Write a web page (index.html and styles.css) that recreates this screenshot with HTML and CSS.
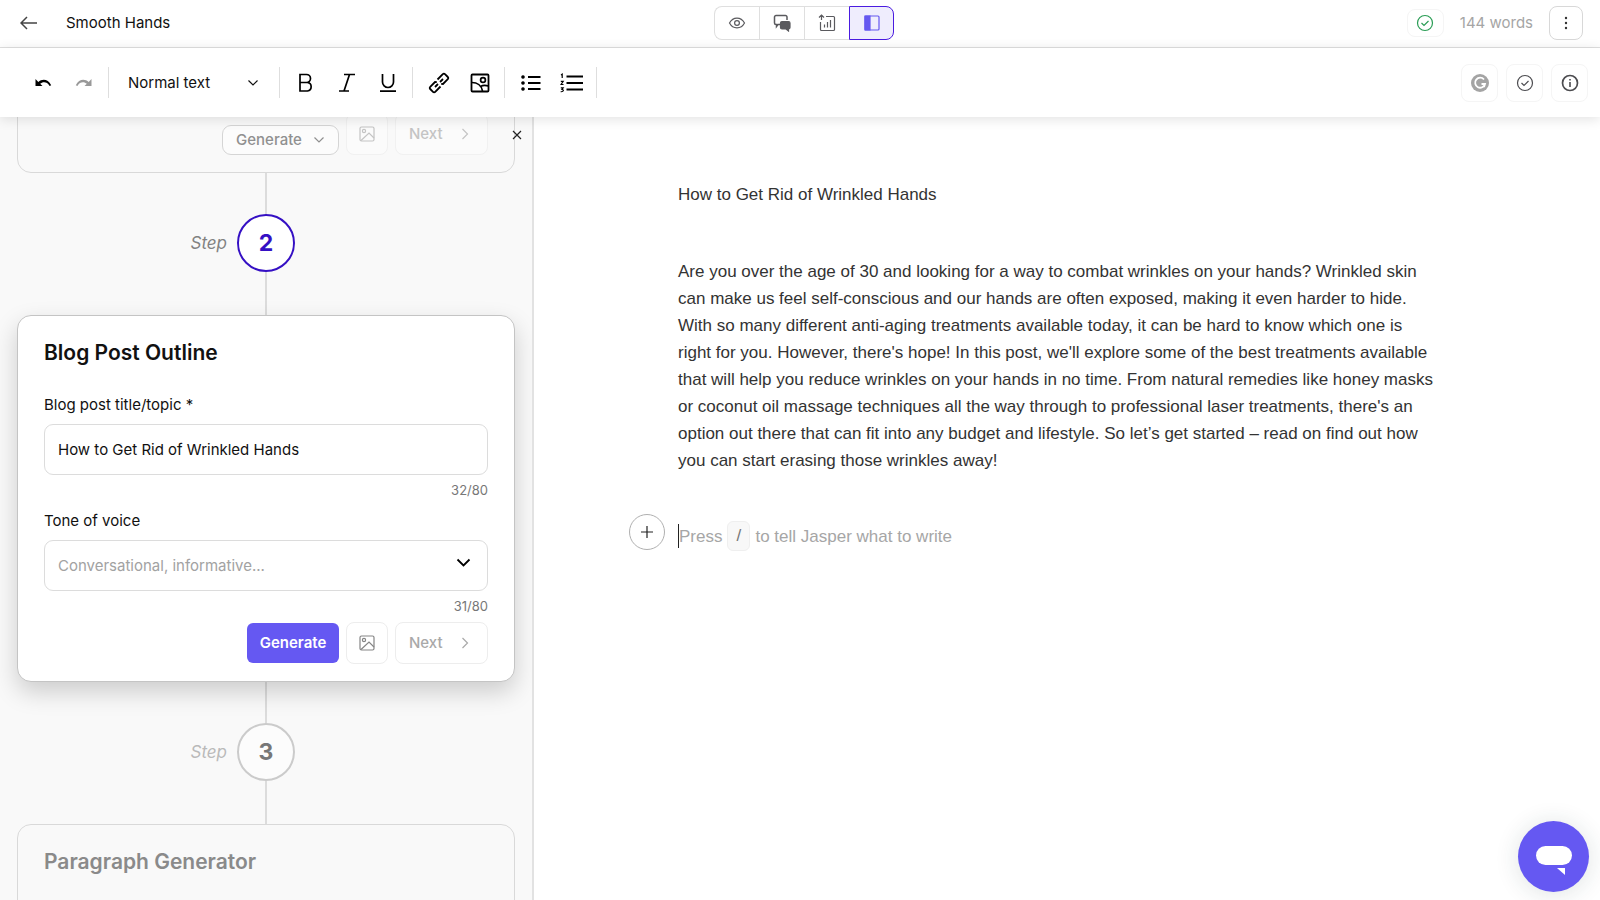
FILE: index.html
```html
<!DOCTYPE html>
<html lang="en">
<head>
<meta charset="utf-8">
<title>Smooth Hands</title>
<link rel="stylesheet" href="styles.css">
</head>
<body>
<svg class="defs" width="0" height="0" aria-hidden="true">
  <symbol id="picture" viewBox="0 0 16 16"><rect x="1" y="1" width="14" height="14" rx="1.5"/><circle cx="5" cy="5" r="1.6"/><path d="M2 14.5 10 7l5 5"/></symbol>
  <symbol id="chev-right" viewBox="0 0 8 12"><path d="M1.5 1 6.5 6l-5 5"/></symbol>
  <symbol id="chev-down" viewBox="0 0 12 8"><path d="M1.5 1.5 6 6l4.500-4.500"/></symbol>
  <symbol id="check" viewBox="0 0 18 18"><circle cx="9" cy="9" r="7.500"/><path d="m5.500 9 2.500 2.500 4.500-4.500"/></symbol>
</svg>

<header class="topbar">
  <div class="topbar-left">
    <button class="plain" aria-label="Back"><svg class="line back" width="18" height="14" viewBox="0 0 18 14"><path d="M7 1 1 7l6 6M1 7h16"/></svg></button>
    <span class="doc-name">Smooth Hands</span>
  </div>
  <div class="segments">
    <button class="segment" aria-label="Focus"><svg class="line" width="18" height="18" viewBox="0 0 18 18"><path d="M1.500 9C5 2.500 13 2.500 16.500 9 13 15.500 5 15.500 1.500 9z"/><circle cx="9" cy="9" r="2.400"/></svg></button>
    <button class="segment" aria-label="Chat"><svg class="line" width="18" height="18" viewBox="0 0 18 18"><path stroke-width="1.500" d="M7 10.500H5L3.500 12.500v-2H3a1.500 1.500 0 0 1-1.500-1.500V3A1.500 1.500 0 0 1 3 1.500h9.500A1.500 1.500 0 0 1 14 3v3"/><path fill="currentColor" d="M9 7.500h6.500a1.500 1.500 0 0 1 1.500 1.500v4.500a1.500 1.500 0 0 1-1.500 1.500v2l-2.500-2H9A1.500 1.500 0 0 1 7.500 13.500V9A1.500 1.500 0 0 1 9 7.500z"/></svg></button>
    <button class="segment" aria-label="Statistics"><svg class="line" width="18" height="18" viewBox="0 0 18 18"><path d="M8 2.500h7.500a1 1 0 0 1 1 1v12a1 1 0 0 1-1 1h-12a1 1 0 0 1-1-1V8M3.500 6V1M1 3.500 3.500 1 6 3.500M6.500 13.500v-3M9.500 13.500V8M12.500 13.500V6"/></svg></button>
    <button class="segment active" aria-label="Side panel" aria-pressed="true"><svg class="line" width="18" height="18" viewBox="0 0 18 18"><rect x="2" y="2" width="14" height="14" rx="1"/><path fill="currentColor" d="M2 2h5v14H2z"/></svg></button>
  </div>
  <div class="topbar-right">
    <button class="soft status" aria-label="Saved"><svg class="line" width="18" height="18"><use href="#check"/></svg></button>
    <span class="words">144 words</span>
    <button class="more" aria-label="More"><svg width="4" height="16" viewBox="0 0 4 16"><circle cx="2" cy="3" r="1.200"/><circle cx="2" cy="8" r="1.200"/><circle cx="2" cy="13" r="1.200"/></svg></button>
  </div>
</header>

<div class="toolbar" role="toolbar" aria-label="Formatting">
  <div class="group">
    <button class="tool" aria-label="Undo"><svg width="18" height="12" viewBox="0 0 18 12"><path fill="currentColor" d="M1.500 2v7h7L6.200 6.700C8.500 4.600 13 4 15.600 9l1.600-.7C14 1.500 8 1.800 4.300 4.900z"/></svg></button>
    <button class="tool faded" aria-label="Redo"><svg width="18" height="12" viewBox="0 0 18 12"><path fill="currentColor" d="M16.500 2v7h-7l2.300-2.300C9.500 4.600 5 4 2.400 9L.8 8.300C4 1.500 10 1.800 13.700 4.900z"/></svg></button>
  </div>
  <div class="style-pick">
    <select class="style-select" aria-label="Text style"><option>Normal text</option></select>
    <svg class="line chevron" width="12" height="8"><use href="#chev-down"/></svg>
  </div>
  <div class="group">
    <button class="tool" aria-label="Bold"><svg class="line" width="20" height="20" viewBox="0 0 20 20"><path stroke-width="1.700" d="M4 1.500h6.500a4 4 0 0 1 0 8H4zM4 9.500h7.500a4.300 4.300 0 0 1 0 8.500H4z"/></svg></button>
    <button class="tool" aria-label="Italic"><svg class="line" width="20" height="20" viewBox="0 0 20 20"><path stroke-width="1.700" d="M7 1.500h11M2 18h10M12.500 1.500 7 18"/></svg></button>
    <button class="tool" aria-label="Underline"><svg class="line" width="20" height="20" viewBox="0 0 20 20"><path stroke-width="1.700" d="M4.500 1v8a5.500 5.500 0 0 0 11 0V1M2 18.200h16"/></svg></button>
  </div>
  <div class="group">
    <button class="tool" aria-label="Link"><svg class="line" width="22" height="22" viewBox="0 0 22 22"><path stroke-width="1.800" d="m9.500 7.500 5.300-5.300a1.500 1.500 0 0 1 2.200 0l2.800 2.800a1.500 1.500 0 0 1 0 2.200l-4.800 4.800-1.800-.2M12.500 14.500l-5.300 5.300a1.500 1.500 0 0 1-2.200 0L2.200 17a1.500 1.500 0 0 1 0-2.200L7 10l1.800.2M7 15l3-3M12 10l3-3"/></svg></button>
    <button class="tool" aria-label="Image"><svg class="line" width="20" height="20" viewBox="0 0 20 20"><rect stroke-width="1.800" x="1.500" y="1.500" width="17" height="17" rx="1"/><circle stroke-width="1.700" cx="13" cy="7" r="2.400"/><path stroke-width="1.700" d="M2 9.500c5 0 9.500 3 10.500 8.500M10.500 13.500c2.500-1.500 5-1.500 8-.5"/></svg></button>
  </div>
  <div class="group">
    <button class="tool" aria-label="Bulleted list"><svg class="line" width="20" height="16" viewBox="0 0 20 16"><path stroke-width="1.800" d="M7 2h12.500M7 8h12.500M7 14h12.500"/><g fill="currentColor"><circle cx="2" cy="2" r="1.200"/><circle cx="2" cy="8" r="1.200"/><circle cx="2" cy="14" r="1.200"/></g></svg></button>
    <button class="tool" aria-label="Numbered list"><svg class="line" width="24" height="20" viewBox="0 0 24 20"><path stroke-width="2" d="M6.500 3.500H23M6.500 10H23M6.500 16.500H23"/><path d="M1 2l1.200-.8V5M.8 8.300h2.400L1 11.500h2.500M.8 14.800h2.400L2 16.500c2 0 2 2.500-1.300 2.200"/></svg></button>
  </div>
  <div class="group end">
    <button class="soft" aria-label="Grammar"><svg class="grammar" width="18" height="18" viewBox="0 0 18 18"><circle cx="9" cy="9" r="9"/><path d="M13 5.500A5 5 0 1 0 14 10h-3.500M14 10l-1 3"/></svg></button>
    <button class="soft" aria-label="Plagiarism check"><svg class="line" width="18" height="18"><use href="#check"/></svg></button>
    <button class="soft" aria-label="Information"><svg class="line" width="18" height="18" viewBox="0 0 18 18"><circle stroke-width="1.700" cx="9" cy="9" r="7.500"/><path stroke-width="1.600" d="M9 8v5M9 5v1.500"/></svg></button>
  </div>
</div>

<div class="workspace">
  <aside class="panel">
    <button class="close plain" aria-label="Close"><svg class="line" width="10" height="10" viewBox="0 0 10 10"><path d="m1 1 8 8M9 1 1 9"/></svg></button>
    <section class="card done">
      <div class="actions">
        <button class="again">Generate <svg class="line" width="12" height="8"><use href="#chev-down"/></svg></button>
        <button class="box" aria-label="Add image"><svg class="line" width="16" height="16"><use href="#picture"/></svg></button>
        <button class="box next">Next <svg class="line" width="8" height="12"><use href="#chev-right"/></svg></button>
      </div>
    </section>
    <div class="step">
      <span class="step-label">Step</span><span class="step-number">2</span>
    </div>
    <section class="card current">
      <h2 class="card-title">Blog Post Outline</h2>
      <label class="field-label" for="topic">Blog post title/topic *</label>
      <input class="field" id="topic" type="text" value="How to Get Rid of Wrinkled Hands">
      <div class="count">32/80</div>
      <label class="field-label" for="tone">Tone of voice</label>
      <div class="tone">
        <select class="field placeholder" id="tone"><option>Conversational, informative...</option></select>
        <svg class="line tone-chevron" width="15" height="10" viewBox="0 0 15 10"><path stroke-width="1.800" d="m1.500 1.500 6 6 6-6"/></svg>
      </div>
      <div class="count">31/80</div>
      <div class="actions">
        <button class="primary">Generate</button>
        <button class="box" aria-label="Add image"><svg class="line" width="16" height="16"><use href="#picture"/></svg></button>
        <button class="box next">Next <svg class="line" width="8" height="12"><use href="#chev-right"/></svg></button>
      </div>
    </section>
    <div class="step upcoming">
      <span class="step-label">Step</span><span class="step-number">3</span>
    </div>
    <section class="card later">
      <h2 class="card-title">Paragraph Generator</h2>
    </section>
  </aside>

  <main class="editor">
    <article class="page">
      <p class="heading">How to Get Rid of Wrinkled Hands</p>
      <p class="body-text">Are you over the age of 30 and looking for a way to combat wrinkles on your hands? Wrinkled skin<br>can make us feel self-conscious and our hands are often exposed, making it even harder to hide.<br>With so many different anti-aging treatments available today, it can be hard to know which one is<br>right for you. However, there's hope! In this post, we'll explore some of the best treatments available<br>that will help you reduce wrinkles on your hands in no time. From natural remedies like honey masks<br>or coconut oil massage techniques all the way through to professional laser treatments, there's an<br>option out there that can fit into any budget and lifestyle. So let’s get started – read on find out how<br>you can start erasing those wrinkles away!</p>
      <div class="prompt">
        <button class="add" aria-label="Add block"><svg class="line" width="12" height="12" viewBox="0 0 12 12"><path d="M6 0v12M0 6h12"/></svg></button>
        <p class="hint">Press <kbd class="key">/</kbd> to tell Jasper what to write</p>
      </div>
    </article>
  </main>
</div>

<button class="chat" aria-label="Open chat"><svg width="36" height="30" viewBox="0 0 36 30"><rect width="36" height="19" rx="9.500"/><path d="M21 22h8v7z"/></svg></button>
</body>
</html>
```
FILE: styles.css
```css
* { box-sizing: border-box; }

body {
  margin: 0;
  height: 100vh;
  display: flex;
  flex-direction: column;
  overflow: hidden;
  background: #fff;
  color: #111;
  font: 15px/20px Inter, "Liberation Sans", sans-serif;
}

button, input, select {
  font: inherit;
  color: inherit;
  margin: 0;
}

button {
  display: flex;
  align-items: center;
  justify-content: center;
  padding: 0;
  border: 0;
  background: none;
}

h2, p { margin: 0; }
select { appearance: none; }
.defs { position: absolute; }

.line {
  display: block;
  fill: none;
  stroke: currentColor;
  stroke-width: 1.2;
}

/* Top bar */
.topbar {
  flex: none;
  display: grid;
  grid-template-columns: 1fr auto 1fr;
  align-items: center;
  height: 48px;
  padding: 1px 12px 3px 20px;
  border-bottom: 1px solid #e0e0e0;
}

.topbar-left { display: flex; align-items: center; gap: 28px; }
.back { color: #444; stroke-width: 1.5; }

.segments {
  display: flex;
  height: 34px;
}

.segment {
  width: 45px;
  border: 1px solid #dfdfdf;
  border-right: 0;
  color: #5a5a5e;
}

.segment:first-child { border-radius: 8px 0 0 8px; }

.segment.active {
  border: 1px solid #4a1be0;
  border-radius: 0 8px 8px 0;
  background: #efedfd;
  color: #6558f0;
}

.topbar-right {
  display: flex;
  align-items: center;
  justify-content: flex-end;
  gap: 16px;
  padding-right: 5px;
}

.words { color: #a5a5a5; }

.soft {
  width: 37px;
  height: 38px;
  border: 1px solid #f5f5f5;
  border-radius: 8px;
  color: #4c4c50;
}

.status { height: 28px; color: #2a9d55; }

.more {
  width: 34px;
  height: 34px;
  border: 1px solid #d8d8d8;
  border-radius: 8px;
  fill: #333;
}

/* Formatting toolbar */
.toolbar {
  position: relative;
  z-index: 2;
  flex: none;
  display: flex;
  align-items: center;
  height: 69px;
  padding: 0 12px 0 17px;
  background: #fff;
  box-shadow: 0 2px 12px rgba(0, 0, 0, 0.12);
}

.group, .style-pick {
  display: flex;
  align-items: center;
  height: 31px;
  padding: 0 4px 0 5px;
  border-right: 1px solid #dedede;
}

.tool { width: 41px; height: 31px; color: #000; }
.faded { color: #999; }

.style-pick {
  position: relative;
  width: 171px;
  padding: 0;
}

.style-select {
  width: 100%;
  padding: 0 40px 0 19px;
  border: 0;
  background: none;
}

.chevron { position: absolute; right: 20px; pointer-events: none; }

.group.end {
  margin-left: auto;
  gap: 8px;
  padding: 0;
  border: 0;
}

.grammar { fill: #a4a4a4; }
.grammar path { fill: none; stroke: #fff; stroke-width: 1.8; }

/* Workspace */
.workspace {
  flex: 1;
  display: flex;
  min-height: 0;
}

.panel {
  position: relative;
  flex: none;
  width: 534px;
  padding: 0 17px;
  overflow: hidden;
  background: #f9f9f9;
  border-right: 2px solid #e2e2e2;
}

.close {
  position: absolute;
  top: 10px;
  right: 7px;
  width: 16px;
  height: 16px;
  color: #222;
}

.card {
  padding: 15px 26px 17px;
  border: 1px solid #d9d9d9;
  border-radius: 14px;
}

.done { margin-top: -20px; }

.current {
  position: relative;
  padding-top: 24px;
  border-color: #c4c4c4;
  background: #fff;
  box-shadow: 0 10px 24px rgba(0, 0, 0, 0.18);
}

.later {
  min-height: 240px;
  padding-top: 24px;
  color: #8a8a8a;
}

.card-title {
  font-size: 21px;
  line-height: 26px;
  font-weight: 600;
}

.field-label { display: block; }
.card-title + .field-label { margin-top: 29px; }

.field {
  display: block;
  width: 100%;
  height: 51px;
  margin-top: 9px;
  padding: 0 13px;
  border: 1px solid #dcdcdc;
  border-radius: 9px;
  background: #fff;
}

.tone { position: relative; }
.placeholder { color: #a2a2a2; }

.tone-chevron {
  position: absolute;
  top: 18px;
  right: 17px;
  color: #000;
  pointer-events: none;
}

.count {
  margin: 5px 0 11px;
  text-align: right;
  font-size: 13px;
  color: #777;
}

.tone + .count { margin-bottom: 6px; }

.actions {
  display: flex;
  align-items: center;
  justify-content: flex-end;
  gap: 7px;
  font-weight: 500;
}

.primary {
  width: 92px;
  height: 40px;
  border-radius: 6px;
  background: #6558f2;
  color: #fff;
  font-weight: 600;
}

.again {
  align-self: flex-end;
  width: 117px;
  height: 30px;
  gap: 11px;
  border: 1px solid #d5d5d5;
  border-radius: 9px;
  background: #fcfcfc;
  color: #909090;
}

.box {
  width: 42px;
  height: 42px;
  border: 1px solid #ededed;
  border-radius: 8px;
  color: #858585;
}

.next {
  justify-content: flex-start;
  width: 93px;
  gap: 18px;
  padding-left: 13px;
  color: #a9a9a9;
}

.done .box { border-color: #f1f1f1; background: #fbfbfb; color: #c4c4c4; }

/* Step markers joined by a vertical rule */
.step {
  display: grid;
  grid-template-columns: 1fr 58px 1fr;
  align-items: center;
  padding: 41px 0 43px;
  background: linear-gradient(#dcdcdc, #dcdcdc) center / 2px 100% no-repeat;
}

.step-label {
  padding-right: 10px;
  text-align: right;
  font-size: 17px;
  font-style: italic;
  color: #828282;
}

.step-number {
  display: flex;
  align-items: center;
  justify-content: center;
  height: 58px;
  border: 2px solid #3510c4;
  border-radius: 50%;
  background: #fff;
  color: #3510c4;
  font-size: 23px;
  font-weight: 700;
}

.upcoming .step-label { color: #bababa; }
.upcoming .step-number { border-color: #cbcbcb; background: #fcfcfc; color: #777; }

/* Document */
.editor {
  flex: 1;
  min-width: 0;
}

.page {
  max-width: 778px;
  margin: 0 auto;
  padding-top: 64px;
  font-family: "Liberation Sans", Arial, sans-serif;
  font-size: 17px;
  line-height: 27px;
  color: #333;
}

.body-text { margin-top: 50px; white-space: nowrap; }

.prompt {
  position: relative;
  margin-top: 50px;
}

.add {
  position: absolute;
  top: -10px;
  left: -49px;
  width: 36px;
  height: 36px;
  border: 1px solid #b0b0b0;
  border-radius: 50%;
  background: #fff;
  color: #222;
}

.hint {
  display: flex;
  align-items: center;
  gap: 5px;
  height: 24px;
  border-left: 1px solid #222;
  color: #a6a6a6;
}

.key {
  width: 23px;
  border: 1px solid #efefef;
  border-radius: 6px;
  background: #f8f8f8;
  color: #777;
  font: inherit;
  line-height: 28px;
  text-align: center;
}

.chat {
  position: fixed;
  right: 11px;
  bottom: 8px;
  width: 71px;
  height: 71px;
  padding-top: 8px;
  border-radius: 50%;
  background: #6558f2;
  fill: #fff;
  box-shadow: 0 2px 24px rgba(30, 60, 60, 0.14);
}
```
